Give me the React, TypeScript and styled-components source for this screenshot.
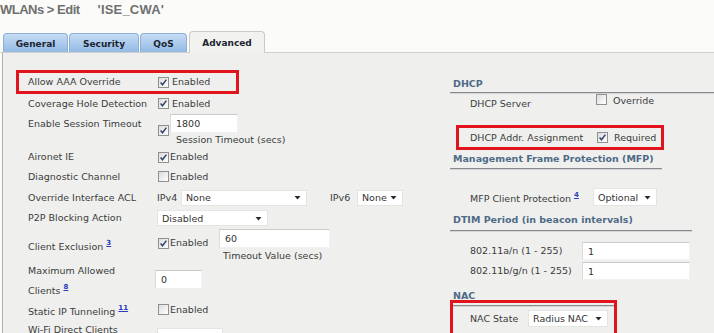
import React from "react";
import styled, { createGlobalStyle } from "styled-components";

const Global = createGlobalStyle`
  html, body { margin: 0; padding: 0; background: #fbfcfa; overflow: hidden; }
  body { font-family: "DejaVu Sans", Verdana, sans-serif; }
`;

const Page = styled.div`
  width: 714px;
  height: 333px;
  display: flex;
  flex-direction: column;
  background: #fbfcfa;
  overflow: hidden;
`;

const Title = styled.h1`
  flex: none;
  margin: 0;
  height: 31px;
  padding-top: 2px;
  box-sizing: border-box;
  display: flex;
  align-items: flex-start;
  font-family: "Liberation Sans", Arial, sans-serif;
  font-weight: bold;
  font-size: 13px;
  letter-spacing: -0.5px;
  line-height: 16px;
  color: #707070;
  white-space: pre;
`;

const TitleName = styled.span`
  margin-left: 18px;
  letter-spacing: 0.2px;
`;

const TabBar = styled.div`
  flex: none;
  display: flex;
  align-items: flex-end;
  height: 22px;
  box-sizing: border-box;
  padding-left: 3px;
  border-bottom: 1px solid #cdd0cc;
`;

const Tab = styled.div<{ $w: number; $active?: boolean; $ml?: number }>`
  width: ${(p) => p.$w}px;
  height: ${(p) => (p.$active ? 22 : 19)}px;
  margin-left: ${(p) => p.$ml ?? 0}px;
  margin-bottom: ${(p) => (p.$active ? -1 : 0)}px;
  box-sizing: border-box;
  display: flex;
  align-items: center;
  justify-content: center;
  padding-top: ${(p) => (p.$active ? 0 : 1)}px;
  font-weight: bold;
  font-size: 9px;
  color: #1c2631;
  border: 1px solid ${(p) => (p.$active ? "#c9cbc7" : "#8fb0d6")};
  border-bottom: none;
  border-radius: 4px 4px 0 0;
  background: ${(p) => (p.$active ? "#f2f3f1" : "linear-gradient(#c6dcf4, #93bae5)")};
`;

const Panel = styled.div`
  flex: 1;
  min-height: 0;
  overflow: hidden;
  display: flex;
  margin-left: 2px;
  border-left: 1px solid #aeb0ad;
  background: #eff0ee;
`;

const LeftCol = styled.div`
  flex: none;
  width: 447px;
  padding: 17px 0 0 13px;
  box-sizing: border-box;
  display: flex;
  flex-direction: column;
`;

const Row = styled.div<{ $h: number; $top?: boolean }>`
  flex: none;
  display: grid;
  grid-template-columns: 127px auto;
  height: ${(p) => p.$h}px;
  align-items: ${(p) => (p.$top ? "start" : "center")};
  padding-left: 12px;
  box-sizing: border-box;
`;

const RedRow = styled(Row)`
  width: 223px;
  padding-left: 9px;
  border: 3px solid #e1131d;
`;

const Label = styled.div<{ $pt?: number; $lh?: number }>`
  font-size: 9.5px;
  line-height: ${(p) => p.$lh ?? 12}px;
  padding-top: ${(p) => p.$pt ?? 0}px;
  color: #3b3b3b;
  white-space: nowrap;
`;

const Sup = styled.span`
  font-size: 7px;
  color: #2b3cb8;
  text-decoration: underline;
  vertical-align: 5px;
  margin-left: 3px;
  font-weight: bold;
`;

const BoxWrap = styled.span`
  width: 11px;
  height: 11px;
  box-sizing: border-box;
  display: inline-flex;
  flex: none;
  border: 1px solid #8f9190;
  background: linear-gradient(135deg, #dcdcdc, #ffffff);
`;

const Check = ({ checked }: { checked?: boolean }) => (
  <BoxWrap>
    {checked && (
      <svg width="9" height="9" viewBox="0 0 9 9">
        <path d="M1.6 4.6 L3.5 6.8 L7.4 1.6" fill="none" stroke="#34456a" strokeWidth="1.5" />
      </svg>
    )}
  </BoxWrap>
);

const CheckLine = styled.div<{ $gap: number; $ml?: number; $mt?: number; $w?: number }>`
  display: flex;
  align-items: center;
  gap: ${(p) => p.$gap}px;
  margin-left: ${(p) => p.$ml ?? 3}px;
  margin-top: ${(p) => p.$mt ?? 0}px;
  width: ${(p) => (p.$w ? `${p.$w}px` : "auto")};
  font-size: 9.5px;
  line-height: 12px;
  color: #3b3b3b;
  white-space: nowrap;
`;

const TextBox = styled.div<{ $w: number; $h: number; $mt?: number; $ml?: number }>`
  width: ${(p) => p.$w}px;
  height: ${(p) => p.$h}px;
  margin-top: ${(p) => p.$mt ?? 0}px;
  margin-left: ${(p) => p.$ml ?? 0}px;
  box-sizing: border-box;
  background: #ffffff;
  border-top: 1px solid #c9cbc8;
  border-left: 1px solid #dadcd9;
  border-right: 1px solid #f1f1f1;
  border-bottom: 1px solid #f1f1f1;
  font-size: 9.5px;
  color: #333;
  padding: 0 5px;
  display: flex;
  align-items: center;
  flex: none;
`;

const SelectBox = styled.div<{ $w: number; $h?: number; $mt?: number; $ml?: number }>`
  width: ${(p) => p.$w}px;
  height: ${(p) => p.$h ?? 16}px;
  margin-top: ${(p) => p.$mt ?? 0}px;
  margin-left: ${(p) => p.$ml ?? 0}px;
  box-sizing: border-box;
  background: #ffffff;
  border: 1px solid #e4e5e3;
  font-size: 9.5px;
  color: #333;
  padding: 0 5px 0 4px;
  display: flex;
  align-items: center;
  justify-content: space-between;
  flex: none;
`;

const Arrow = () => (
  <svg width="7" height="5" viewBox="0 0 7 5">
    <path d="M0.5 1 L6.5 1 L3.5 4.5 Z" fill="#2a2a2a" />
  </svg>
);

const Select = ({ w, h, mt, ml, value }: { w: number; h?: number; mt?: number; ml?: number; value: string }) => (
  <SelectBox $w={w} $h={h} $mt={mt} $ml={ml}>
    <span>{value}</span>
    <Arrow />
  </SelectBox>
);

const Stack = styled.div<{ $ml?: number }>`
  display: flex;
  flex-direction: column;
  margin-left: ${(p) => p.$ml ?? 0}px;
`;

const Inline = styled.div`
  display: flex;
  align-items: flex-start;
`;

const InlineC = styled.div`
  display: flex;
  align-items: center;
`;

const Caption = styled.div<{ $ml: number; $mt?: number }>`
  font-size: 9.5px;
  line-height: 12px;
  color: #3b3b3b;
  margin-left: ${(p) => p.$ml}px;
  margin-top: ${(p) => p.$mt ?? 0}px;
  white-space: nowrap;
`;

const SmallText = styled.span<{ $ml?: number; $w?: number }>`
  font-size: 9.5px;
  color: #3b3b3b;
  margin-left: ${(p) => p.$ml ?? 0}px;
  width: ${(p) => (p.$w ? `${p.$w}px` : "auto")};
  flex: none;
`;

/* right column */
const RightCol = styled.div`
  flex: none;
  width: 264px;
  padding-top: 25px;
  display: flex;
  flex-direction: column;
`;

const Heading = styled.div<{ $w: number; $mt?: number; $pb?: number; $lh?: number; $noLine?: boolean }>`
  flex: none;
  width: ${(p) => p.$w}px;
  margin-top: ${(p) => p.$mt ?? 0}px;
  padding-left: 3px;
  padding-bottom: ${(p) => p.$pb ?? 2}px;
  box-sizing: border-box;
  font-weight: bold;
  font-size: 9.5px;
  line-height: ${(p) => p.$lh ?? 12}px;
  color: #4e6a87;
  white-space: nowrap;
  border-bottom: ${(p) => (p.$noLine ? "none" : "1px solid #868b90")};
  box-shadow: ${(p) => (p.$noLine ? "none" : "0 1px 0 #d3d5d2")};
`;

const RRow = styled.div<{ $h: number; $lw: number; $mt?: number; $top?: boolean }>`
  flex: none;
  display: grid;
  grid-template-columns: ${(p) => p.$lw}px auto;
  height: ${(p) => p.$h}px;
  margin-top: ${(p) => p.$mt ?? 0}px;
  align-items: ${(p) => (p.$top ? "start" : "center")};
  padding-left: 20px;
`;

const RedBox = styled.div<{ $w: number; $h: number; $ml: number; $mt: number }>`
  width: ${(p) => p.$w}px;
  height: ${(p) => p.$h}px;
  margin-left: ${(p) => p.$ml}px;
  margin-top: ${(p) => p.$mt}px;
  box-sizing: border-box;
  border: 3px solid #e1131d;
  display: flex;
  flex-direction: column;
  flex: none;
`;

const RedInner = styled.div<{ $lw: number; $pl: number; $h: number }>`
  display: grid;
  grid-template-columns: ${(p) => p.$lw}px auto;
  align-items: center;
  padding-left: ${(p) => p.$pl}px;
  height: ${(p) => p.$h}px;
`;

const InnerRule = styled.div`
  margin-top: 2px;
  height: 1px;
  background: #868b90;
  box-shadow: 0 1px 0 #d3d5d2;
`;

export default function App() {
  return (
    <Page>
      <Global />
      <Title>
        {"WLANs > Edit"}
        <TitleName>'ISE_CWA'</TitleName>
      </Title>
      <TabBar>
        <Tab $w={65}>General</Tab>
        <Tab $w={70} $ml={1}>Security</Tab>
        <Tab $w={47} $ml={1}>QoS</Tab>
        <Tab $w={76} $ml={2} $active>Advanced</Tab>
      </TabBar>
      <Panel>
        <LeftCol>
          <RedRow $h={24}>
            <Label>Allow AAA Override</Label>
            <CheckLine $gap={3}>
              <Check checked />
              Enabled
            </CheckLine>
          </RedRow>
          <Row $h={19}>
            <Label>Coverage Hole Detection</Label>
            <CheckLine $gap={3}>
              <Check checked />
              Enabled
            </CheckLine>
          </Row>
          <Row $h={35} $top>
            <Label $pt={5}>Enable Session Timeout</Label>
            <Inline>
              <CheckLine $gap={0} $mt={12}>
                <Check checked />
              </CheckLine>
              <Stack $ml={1}>
                <TextBox $w={68} $h={19} $mt={1}>1800</TextBox>
                <Caption $ml={6} $mt={1}>Session Timeout (secs)</Caption>
              </Stack>
            </Inline>
          </Row>
          <Row $h={18}>
            <Label>Aironet IE</Label>
            <CheckLine $gap={1}>
              <Check checked />
              Enabled
            </CheckLine>
          </Row>
          <Row $h={21}>
            <Label>Diagnostic Channel</Label>
            <CheckLine $gap={1}>
              <Check />
              Enabled
            </CheckLine>
          </Row>
          <Row $h={21}>
            <Label>Override Interface ACL</Label>
            <InlineC>
              <SmallText $ml={2} $w={24}>IPv4</SmallText>
              <Select w={126} value="None" />
              <SmallText $ml={23} $w={27}>IPv6</SmallText>
              <Select w={46} value="None" />
            </InlineC>
          </Row>
          <Row $h={20}>
            <Label>P2P Blocking Action</Label>
            <Select w={111} ml={2} value="Disabled" />
          </Row>
          <Row $h={34} $top>
            <Label $pt={9}>
              Client Exclusion<Sup>3</Sup>
            </Label>
            <Inline>
              <CheckLine $gap={1} $mt={9} $w={61}>
                <Check checked />
                Enabled
              </CheckLine>
              <Stack>
                <TextBox $w={111} $h={19} $mt={1}>60</TextBox>
                <Caption $ml={4} $mt={2}>Timeout Value (secs)</Caption>
              </Stack>
            </Inline>
          </Row>
          <Row $h={36} $top>
            <Label $lh={17}>
              Maximum Allowed
              <br />
              Clients<Sup>8</Sup>
            </Label>
            <TextBox $w={47} $h={19} $mt={8}>0</TextBox>
          </Row>
          <Row $h={23}>
            <Label>
              Static IP Tunneling<Sup>11</Sup>
            </Label>
            <CheckLine $gap={1}>
              <Check />
              Enabled
            </CheckLine>
          </Row>
          <Row $h={20} $top>
            <Label $pt={3}>Wi-Fi Direct Clients</Label>
            <Select w={66} ml={2} mt={7} value="" />
          </Row>
        </LeftCol>
        <RightCol>
          <Heading $w={264}>DHCP</Heading>
          <RRow $h={22} $lw={126} $top>
            <Label $pt={5}>DHCP Server</Label>
            <Inline>
              <CheckLine $gap={6} $ml={0} $mt={1}>
                <Check />
              </CheckLine>
              <Caption $ml={6} $mt={2}>Override</Caption>
            </Inline>
          </RRow>
          <RedBox $w={208} $h={25} $ml={6} $mt={10}>
            <RedInner $lw={127} $pl={11} $h={19}>
              <Label>DHCP Addr. Assignment</Label>
              <CheckLine $gap={6} $ml={0}>
                <Check checked />
                Required
              </CheckLine>
            </RedInner>
          </RedBox>
          <Heading $w={212} $mt={3} $pb={3}>Management Frame Protection (MFP)</Heading>
          <RRow $h={22} $lw={123} $mt={17}>
            <Label>
              MFP Client Protection<Sup>4</Sup>
            </Label>
            <Select w={64} h={18} value="Optional" />
          </RRow>
          <Heading $w={242} $mt={6} $pb={4}>DTIM Period (in beacon intervals)</Heading>
          <RRow $h={20} $lw={112} $mt={10}>
            <Label>802.11a/n (1 - 255)</Label>
            <TextBox $w={108} $h={18}>1</TextBox>
          </RRow>
          <RRow $h={20} $lw={112}>
            <Label>802.11b/g/n (1 - 255)</Label>
            <TextBox $w={108} $h={18}>1</TextBox>
          </RRow>
          <Heading $w={100} $mt={10} $pb={0} $lh={10} $noLine>
            NAC
          </Heading>
          <RedBox $w={167} $h={40} $ml={0} $mt={-1}>
            <InnerRule />
            <RedInner $lw={58} $pl={17} $h={25}>
              <Label>NAC State</Label>
              <Select w={80} h={17} value="Radius NAC" />
            </RedInner>
          </RedBox>
        </RightCol>
      </Panel>
    </Page>
  );
}
